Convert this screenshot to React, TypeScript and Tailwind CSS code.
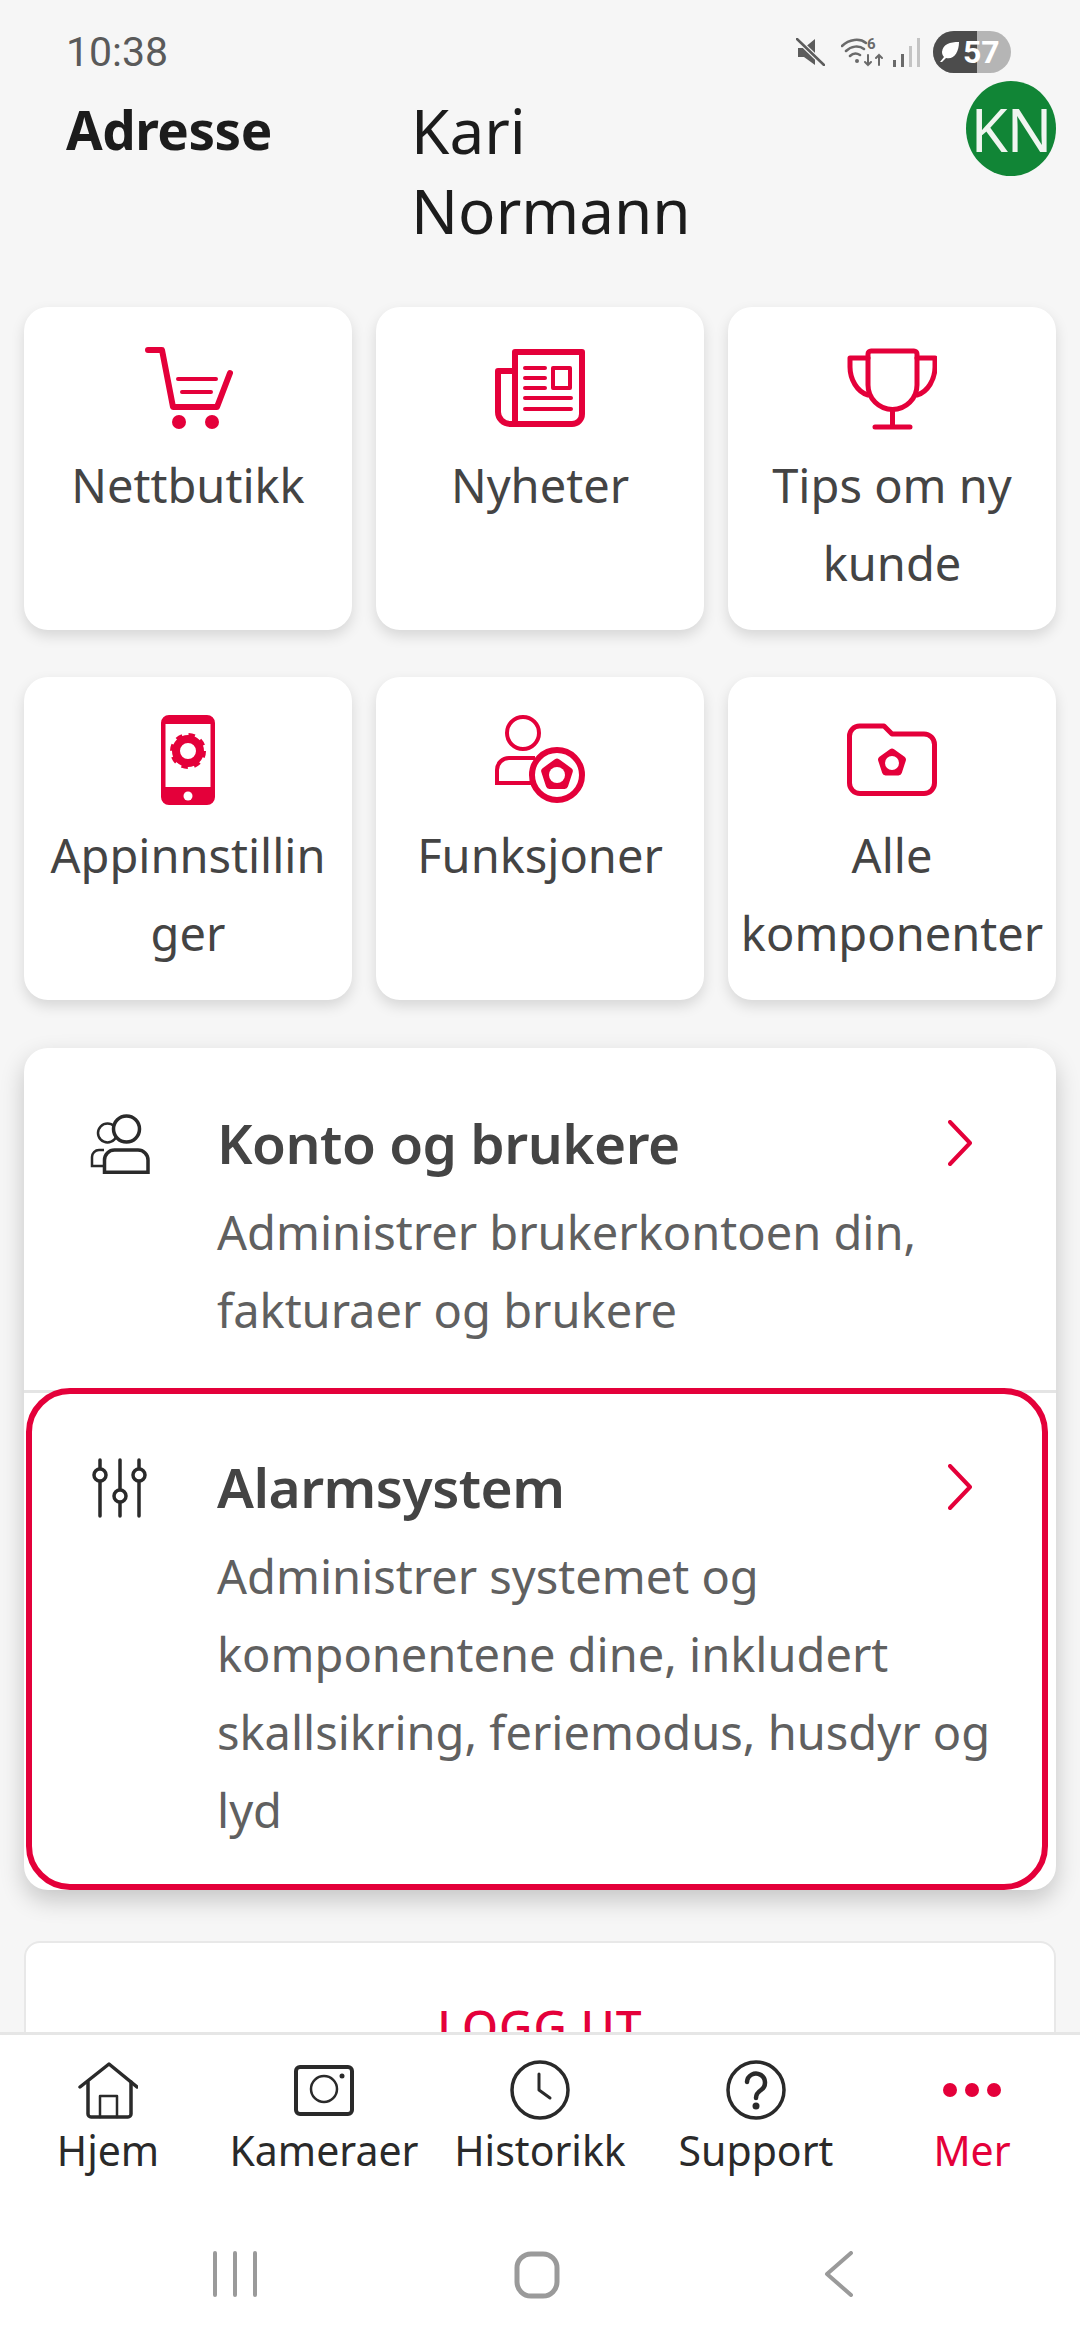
const RED = '#e4003a';

function Flower({ cx, cy, r, hole }: { cx: number; cy: number; r: number; hole: number }) {
  const pts = [0, 72, 144, 216, 288]
    .map((a) => {
      const rad = ((a - 90) * Math.PI) / 180;
      return `${cx + r * Math.cos(rad)},${cy + r * Math.sin(rad)}`;
    })
    .join(' ');
  return (
    <g>
      <polygon points={pts} fill={RED} stroke={RED} strokeWidth="7" strokeLinejoin="round" />
      <circle cx={cx} cy={cy} r={hole} fill="#fff" stroke="none" />
    </g>
  );
}

function Cart() {
  return (
    <svg viewBox="0 0 90 90" className="h-[90px] w-[90px]" fill="none" stroke={RED} strokeLinecap="round" strokeLinejoin="round">
      <path d="M5 5H19L30 62H74L87 28" strokeWidth="6" />
      <path d="M35 34H73M39 47H68" strokeWidth="4" />
      <circle cx="36" cy="77" r="7" fill={RED} stroke="none" />
      <circle cx="69" cy="77" r="7" fill={RED} stroke="none" />
    </svg>
  );
}

function News() {
  return (
    <svg viewBox="0 0 90 90" className="h-[90px] w-[90px]" fill="none" stroke={RED} strokeLinejoin="round">
      <path d="M20 79V7H87V69a10 10 0 0 1-10 10H15a12 12 0 0 1-12-12V26H20" strokeWidth="6" />
      <path d="M30 23H50M30 33H50M30 43H50M30 53H76M30 64H76" strokeWidth="4" strokeLinecap="round" />
      <rect x="58" y="23" width="17" height="20" strokeWidth="4" />
    </svg>
  );
}

function Trophy() {
  return (
    <svg viewBox="0 0 90 90" className="h-[90px] w-[90px]" fill="none" stroke={RED} strokeWidth="5" strokeLinecap="round" strokeLinejoin="round">
      <path d="M24 6H67a3 3 0 0 1 3 3V40a24.5 24.5 0 0 1-49 0V9a3 3 0 0 1 3-3Z" />
      <path d="M21 13H3V22C3 34 10 47 21 50M70 13H88V22C88 34 81 47 70 50" />
      <path d="M45.500 65V82M28 82H63" />
    </svg>
  );
}

function PhoneGear() {
  return (
    <svg viewBox="0 0 90 90" className="h-[90px] w-[90px]" fill="none">
      <path fillRule="evenodd" fill={RED} d="M26 0H64a8 8 0 0 1 8 8V82a8 8 0 0 1-8 8H26a8 8 0 0 1-8-8V8a8 8 0 0 1 8-8ZM22.500 9V72H67.500V9Z" />
      <circle cx="45" cy="81" r="4.500" fill="#fff" />
      <circle cx="45" cy="36" r="12" stroke={RED} strokeWidth="8" />
      <circle cx="45" cy="36" r="15.500" stroke={RED} strokeWidth="5" strokeDasharray="6.090 6.090" />
    </svg>
  );
}

function UserGear() {
  return (
    <svg viewBox="0 0 90 90" className="h-[90px] w-[90px]" fill="none" stroke={RED}>
      <circle cx="28" cy="18" r="16" strokeWidth="4" />
      <path d="M40 43H14A12 12 0 0 0 2 55V68H38" strokeWidth="4" />
      <circle cx="62" cy="60" r="25" strokeWidth="6" fill="#fff" />
      <Flower cx={62} cy={60} r={13} hole={8} />
    </svg>
  );
}

function FolderGear() {
  return (
    <svg viewBox="0 0 90 90" className="h-[90px] w-[90px]" fill="none" stroke={RED}>
      <path d="M2.500 21a10 10 0 0 1 10-10H37l8 8H77a10.500 10.500 0 0 1 10.500 10.500V68A10.500 10.500 0 0 1 77 78.500H13A10.500 10.500 0 0 1 2.500 68Z" strokeWidth="5" strokeLinejoin="round" />
      <Flower cx={45} cy={48} r={11} hole={7} />
    </svg>
  );
}

function Users() {
  return (
    <svg viewBox="0 0 60 60" className="h-[60px] w-[60px]" fill="none" stroke="#2a2a2a">
      <circle cx="17.500" cy="19" r="9.500" strokeWidth="2.500" />
      <path d="M14 36H9a7 7 0 0 0-7 7V52H14" strokeWidth="2.500" />
      <circle cx="36.500" cy="15" r="13" strokeWidth="3.500" fill="#fff" />
      <path d="M14.500 58.200V46a10 10 0 0 1 10-10H48a10 10 0 0 1 10 10V58.200Z" strokeWidth="3.500" fill="#fff" />
    </svg>
  );
}

function Sliders() {
  return (
    <svg viewBox="0 0 60 60" className="h-[60px] w-[60px]" fill="#fff" stroke="#2a2a2a" strokeWidth="3.500" strokeLinecap="round">
      <path d="M10 2V58M30 2V58M49 2V58" />
      <circle cx="10" cy="17" r="6" />
      <circle cx="30" cy="38" r="6" />
      <circle cx="49" cy="17" r="6" />
    </svg>
  );
}

function Chevron() {
  return (
    <svg viewBox="0 0 24 46" className="h-[46px] w-[24px]" fill="none" stroke={RED} strokeWidth="4" strokeLinecap="round" strokeLinejoin="round">
      <path d="M2 2L22 23L2 44" />
    </svg>
  );
}

function StatusIcons() {
  return (
    <div className="flex items-center">
      <svg viewBox="0 0 29 28" className="h-[28px] w-[29px]" fill="#5c5c5c">
        <path d="M2 10H8L19 1V20Z M2 10V19H8L19 27V20Z" />
        <path d="M2 2L28 27" stroke="#f6f6f6" strokeWidth="5" />
        <path d="M1 1L28 27" stroke="#5c5c5c" strokeWidth="2.500" strokeLinecap="round" />
      </svg>
      <svg viewBox="0 0 42 30" className="ml-[16px] h-[30px] w-[42px]" fill="none" stroke="#6a6a6a" strokeWidth="2.500" strokeLinecap="round">
        <path d="M1 9C8 2 19 1 25 6M5 14C10 9 18 8 23 12M9 19C12 16 16 16 19 18" />
        <circle cx="16" cy="24" r="2" fill="#6a6a6a" stroke="none" />
        <text x="26" y="12" fontSize="15" fontWeight="700" fill="#6a6a6a" stroke="none" fontFamily="Roboto, sans-serif">6</text>
        <path d="M27 18V28M24 25L27 28L30 25M38 28V18M35 21L38 18L41 21" strokeWidth="2" />
      </svg>
      <svg viewBox="0 0 27 29" className="ml-[10px] h-[29px] w-[27px]" fill="#6a6a6a">
        <rect x="0" y="22" width="3" height="7" />
        <rect x="8" y="16" width="3" height="13" />
        <rect x="16" y="8" width="3" height="21" fill="#c4c4c4" />
        <rect x="24" y="0" width="3" height="29" fill="#c4c4c4" />
      </svg>
      <div className="relative ml-[13px] flex h-[42px] w-[78px] overflow-hidden rounded-full bg-[#b5b5b5]">
        <div className="h-full w-[44px] bg-[#4c4c4c]" />
        <div className="absolute inset-0 flex items-center pl-[5px]">
          <svg viewBox="0 0 22 22" className="h-[22px] w-[22px]" fill="#fff">
            <path d="M21 1C12 1 5 3 4 11C4 13 5 15 6 16L2 21L4 21L8 17C16 19 21 11 21 1Z" />
          </svg>
          <span className="ml-[3px] text-[32px] leading-[42px] font-bold text-white [font-family:Roboto,sans-serif]">57</span>
        </div>
      </div>
    </div>
  );
}

const tiles = [
  { icon: <Cart />, lines: ['Nettbutikk'] },
  { icon: <News />, lines: ['Nyheter'] },
  { icon: <Trophy />, lines: ['Tips om ny', 'kunde'] },
  { icon: <PhoneGear />, lines: ['Appinnstillin', 'ger'] },
  { icon: <UserGear />, lines: ['Funksjoner'] },
  { icon: <FolderGear />, lines: ['Alle', 'komponenter'] },
];

function Tile({ icon, lines }: { icon: React.ReactNode; lines: string[] }) {
  return (
    <div className="flex flex-col items-center rounded-[24px] bg-white pt-[38px] shadow-[0_6px_14px_rgba(0,0,0,0.13)]">
      {icon}
      <div className="mt-[11px] text-center text-[47px] leading-[78px] whitespace-nowrap text-[#444444]">
        {lines.map((l) => (
          <div key={l}>{l}</div>
        ))}
      </div>
    </div>
  );
}

function RowBody({ title, lines }: { title: string; lines: string[] }) {
  return (
    <div className="ml-[67px] flex-1">
      <div className="flex h-[78px] w-[755px] items-center justify-between">
        <span className="text-[55px] font-semibold tracking-[-0.5px] text-[#444444]">{title}</span>
        <Chevron />
      </div>
      <div className="mt-[11px] text-[47px] leading-[78px] whitespace-nowrap text-[#606060]">
        {lines.map((l) => (
          <div key={l}>{l}</div>
        ))}
      </div>
    </div>
  );
}

const tabs = [
  {
    label: 'Hjem',
    icon: (
      <svg viewBox="0 0 60 60" className="h-[60px] w-[60px]" fill="none" stroke="#2a2a2a" strokeWidth="3.500" strokeLinecap="round" strokeLinejoin="round">
        <path d="M2 27L31 4L59 27" />
        <path d="M10 22V54a3 3 0 0 0 3 3H50a3 3 0 0 0 3-3V22" />
        <path d="M22 57V36H39V57" strokeWidth="2.500" />
      </svg>
    ),
  },
  {
    label: 'Kameraer',
    icon: (
      <svg viewBox="0 0 60 60" className="h-[60px] w-[60px]" fill="none" stroke="#2a2a2a">
        <rect x="2" y="7" width="56" height="47" rx="4" strokeWidth="4" />
        <circle cx="30" cy="29" r="13" strokeWidth="2.500" />
        <circle cx="48" cy="16" r="2.500" fill="#2a2a2a" stroke="none" />
      </svg>
    ),
  },
  {
    label: 'Historikk',
    icon: (
      <svg viewBox="0 0 60 60" className="h-[60px] w-[60px]" fill="none" stroke="#2a2a2a" strokeLinecap="round" strokeLinejoin="round">
        <circle cx="30" cy="30" r="28" strokeWidth="3.500" />
        <path d="M29 14V30L40 38" strokeWidth="3" />
      </svg>
    ),
  },
  {
    label: 'Support',
    icon: (
      <svg viewBox="0 0 60 60" className="h-[60px] w-[60px]" fill="none" stroke="#2a2a2a" strokeLinecap="round">
        <circle cx="30" cy="30" r="28" strokeWidth="3.500" />
        <path d="M21 22a9 9 0 1 1 14 8c-3 2-5 4-5 8" strokeWidth="4.500" />
        <circle cx="30" cy="46" r="3.500" fill="#2a2a2a" stroke="none" />
      </svg>
    ),
  },
  {
    label: 'Mer',
    active: true,
    icon: (
      <svg viewBox="0 0 60 60" className="h-[60px] w-[60px]" fill={RED}>
        <circle cx="8" cy="30" r="7" />
        <circle cx="30" cy="30" r="7" />
        <circle cx="52" cy="30" r="7" />
      </svg>
    ),
  },
];

export default function App() {
  return (
    <div className="flex h-[2340px] w-[1080px] flex-col overflow-hidden bg-[#f6f6f6] [font-family:'Noto_Sans',sans-serif]">
      <div className="min-h-0 flex-1 overflow-hidden">
        {/* status bar */}
        <div className="flex h-[80px] items-start justify-between pt-[31px] pr-[69px] pl-[66px]">
          <span className="text-[41px] leading-[42px] text-[#5a5a5a] [font-family:Roboto,sans-serif]">10:38</span>
          <StatusIcons />
        </div>

        {/* header */}
        <div className="flex h-[227px] items-start pt-[10px] pl-[66px]">
          <div className="w-[345px] text-[53px] leading-[80px] font-bold tracking-[-0.5px] text-[#1c1c1c]">Adresse</div>
          <div className="flex-1 text-[62px] leading-[80px] text-[#1c1c1c]">
            <div>Kari</div>
            <div>Normann</div>
          </div>
          <div className="mt-[-9px] mr-[24px] flex h-[95px] w-[90px] items-center justify-center rounded-[50%] bg-[#118536] text-[60px] tracking-[-1px] text-[#f0f5f0]">
            KN
          </div>
        </div>

        <div className="px-[24px]">
          <div className="grid auto-rows-[323px] grid-cols-3 gap-x-[24px] gap-y-[47px]">
            {tiles.map((t) => (
              <Tile key={t.lines[0]} icon={t.icon} lines={t.lines} />
            ))}
          </div>

          {/* settings list */}
          <div className="mt-[48px] h-[842px] rounded-[24px] bg-white shadow-[0_10px_24px_rgba(0,0,0,0.2)]">
            <div className="flex h-[342px] pt-[56px] pl-[66px]">
              <div className="mt-[10px]">
                <Users />
              </div>
              <RowBody title="Konto og brukere" lines={['Administrer brukerkontoen din,', 'fakturaer og brukere']} />
            </div>
            <div className="h-[3px] bg-[#e4e4e4]" />
            <div className="relative mt-[-5px] mr-[8px] ml-[2px] flex h-[502px] rounded-[44px] border-[6px] border-[#e4003a] pt-[54px] pl-[58px]">
              <div className="mt-[10px]">
                <Sliders />
              </div>
              <RowBody
                title="Alarmsystem"
                lines={['Administrer systemet og', 'komponentene dine, inkludert', 'skallsikring, feriemodus, husdyr og', 'lyd']}
              />
            </div>
          </div>

          <div className="mt-[51px] rounded-[16px] border-2 border-[#e8e8e8] bg-white pt-[58px] pb-[60px] text-center text-[46px] leading-[50px] font-medium tracking-[1px] text-[#e4003a]">
            LOGG UT
          </div>
        </div>
      </div>

      {/* tab bar */}
      <div className="h-[308px] shrink-0 border-t-[3px] border-[#e6e6e6] bg-white">
        <div className="grid grid-cols-5 pt-[25px]">
          {tabs.map((t) => (
            <div key={t.label} className="flex flex-col items-center">
              {t.icon}
              <span className={`mt-[5px] text-[41px] leading-[50px] ${t.active ? 'text-[#e4003a]' : 'text-[#2a2a2a]'}`}>{t.label}</span>
            </div>
          ))}
        </div>
        <div className="mt-[76px] grid grid-cols-3 pr-[90px] pl-[84px]">
          <svg viewBox="0 0 44 46" className="mx-auto h-[46px] w-[44px]" stroke="#9a9a9a" strokeWidth="4" strokeLinecap="round">
            <path d="M2 2V44M22 2V44M42 2V44" />
          </svg>
          <svg viewBox="0 0 46 48" className="mx-auto h-[48px] w-[46px]" fill="none" stroke="#9a9a9a" strokeWidth="5">
            <rect x="3" y="3" width="40" height="42" rx="14" />
          </svg>
          <svg viewBox="0 0 30 46" className="mx-auto h-[46px] w-[30px]" fill="none" stroke="#9a9a9a" strokeWidth="4" strokeLinecap="round" strokeLinejoin="round">
            <path d="M27 2L3 23L27 44" />
          </svg>
        </div>
      </div>
    </div>
  );
}
